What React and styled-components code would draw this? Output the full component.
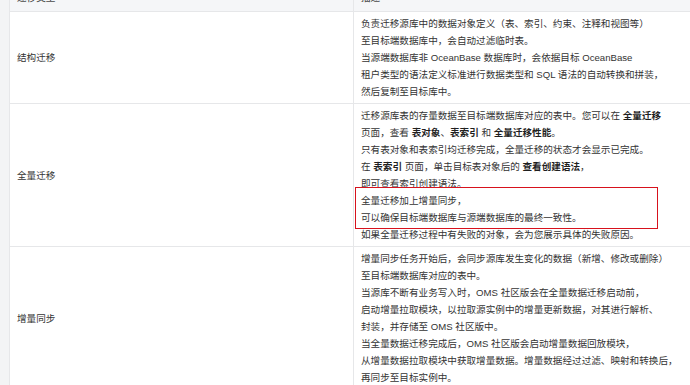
import React from "react";
import styled, { createGlobalStyle } from "styled-components";

const GlobalStyle = createGlobalStyle`
  html, body {
    margin: 0;
    padding: 0;
    background: #fff;
  }
  body {
    font-family: "Liberation Sans", "Noto Sans CJK SC", sans-serif;
  }
`;

const Page = styled.div`
  display: flex;
  width: 690px;
  height: 385px;
  overflow: hidden;
  background: #fff;
`;

const Gutter = styled.div`
  width: 9px;
  flex-shrink: 0;
  background: #f3f4f5;
`;

const Table = styled.table`
  border-collapse: separate;
  border-spacing: 0;
  table-layout: fixed;
  width: 780px;
  flex-shrink: 0;
  margin-top: -16px;
  align-self: flex-start;
  border-left: 1px solid #e6e7e9;
  font-size: 9.6px;
  line-height: 17px;
  color: #3a3a3a;
`;

const HeadCell = styled.th`
  text-align: left;
  font-weight: 500;
  color: #4a4a4a;
  background: #f5f6f8;
  padding: 5px 7px;
  border-bottom: 1px solid #e6e7e9;
  border-right: ${(p) => (p.$divider ? "1px solid #e6e7e9" : "none")};
`;

const Cell = styled.td`
  padding: 3px 7px;
  vertical-align: middle;
  border-bottom: 1px solid #e6e7e9;
  border-right: ${(p) => (p.$divider ? "1px solid #e6e7e9" : "none")};
  color: #333;
`;

const Line = styled.div`
  white-space: nowrap;
`;

const Strong = styled.b`
  font-weight: 700;
  color: #1f1f1f;
`;

const Highlight = styled.div`
  position: relative;
  &::after {
    content: "";
    position: absolute;
    left: -6px;
    top: -5px;
    width: 303px;
    height: 42px;
    box-sizing: border-box;
    border: 1.5px solid #d7121d;
    pointer-events: none;
  }
`;

const rows = [
  {
    type: "结构迁移",
    lines: [
      "负责迁移源库中的数据对象定义（表、索引、约束、注释和视图等）",
      "至目标端数据库中，会自动过滤临时表。",
      "当源端数据库非 OceanBase 数据库时，会依据目标 OceanBase",
      "租户类型的语法定义标准进行数据类型和 SQL 语法的自动转换和拼装，",
      "然后复制至目标库中。",
    ],
  },
  {
    type: "全量迁移",
    lines: [
      <>
        迁移源库表的存量数据至目标端数据库对应的表中。您可以在 <Strong>全量迁移</Strong>
      </>,
      <>
        页面，查看 <Strong>表对象</Strong>、<Strong>表索引</Strong> 和 <Strong>全量迁移性能</Strong>。
      </>,
      "只有表对象和表索引均迁移完成，全量迁移的状态才会显示已完成。",
      <>
        在 <Strong>表索引</Strong> 页面，单击目标表对象后的 <Strong>查看创建语法</Strong>，
      </>,
      "即可查看索引创建语法。",
    ],
    highlight: ["全量迁移加上增量同步，", "可以确保目标端数据库与源端数据库的最终一致性。"],
    after: ["如果全量迁移过程中有失败的对象，会为您展示具体的失败原因。"],
  },
  {
    type: "增量同步",
    lines: [
      "增量同步任务开始后，会同步源库发生变化的数据（新增、修改或删除）",
      "至目标端数据库对应的表中。",
      "当源库不断有业务写入时，OMS 社区版会在全量数据迁移启动前，",
      "启动增量拉取模块，以拉取源实例中的增量更新数据，对其进行解析、",
      "封装，并存储至 OMS 社区版中。",
      "当全量数据迁移完成后，OMS 社区版会启动增量数据回放模块，",
      "从增量数据拉取模块中获取增量数据。增量数据经过过滤、映射和转换后，",
      "再同步至目标实例中。",
    ],
  },
];

function MigrationRow({ row }) {
  return (
    <tr>
      <Cell $divider>{row.type}</Cell>
      <Cell>
        {row.lines.map((line, i) => (
          <Line key={i}>{line}</Line>
        ))}
        {row.highlight && (
          <Highlight>
            {row.highlight.map((line, i) => (
              <Line key={i}>{line}</Line>
            ))}
          </Highlight>
        )}
        {row.after &&
          row.after.map((line, i) => <Line key={i}>{line}</Line>)}
      </Cell>
    </tr>
  );
}

export default function App() {
  return (
    <>
      <GlobalStyle />
      <Page>
        <Gutter />
        <Table>
          <colgroup>
            <col style={{ width: 344 }} />
            <col />
          </colgroup>
          <thead>
            <tr>
              <HeadCell $divider>迁移类型</HeadCell>
              <HeadCell>描述</HeadCell>
            </tr>
          </thead>
          <tbody>
            {rows.map((row) => (
              <MigrationRow row={row} key={row.type} />
            ))}
          </tbody>
        </Table>
      </Page>
    </>
  );
}
